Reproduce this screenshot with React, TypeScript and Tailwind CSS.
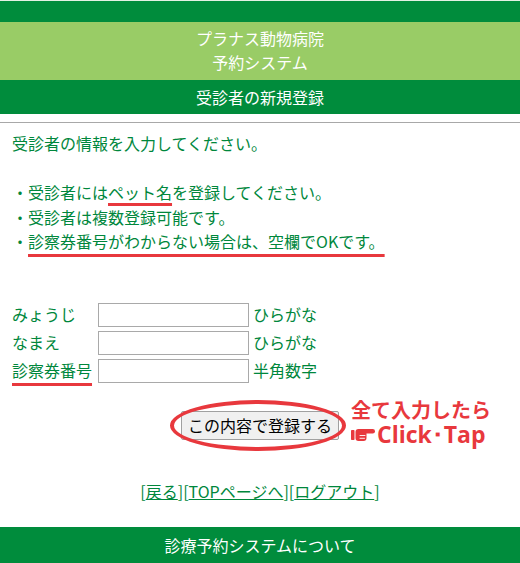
const GREEN = 'bg-[#008c3c]'

const FIELDS = [
  { label: 'みょうじ', hint: 'ひらがな', mark: false },
  { label: 'なまえ', hint: 'ひらがな', mark: false },
  { label: '診察券番号', hint: '半角数字', mark: true },
]

function PointingHand() {
  return (
    <svg width="24" height="16" viewBox="0 0 24 16" className="shrink-0">
      <rect x="0" y="4" width="3.5" height="10" rx="0.8" fill="#e8383d" />
      <rect x="4.5" y="3" width="11" height="12" rx="3" fill="#e8383d" />
      <rect x="10" y="3" width="14" height="4.6" rx="2.3" fill="#e8383d" />
      <path d="M9 9.5h5M9 12.3h4.5" stroke="#fff" strokeWidth="0.9" strokeLinecap="round" />
    </svg>
  )
}

export default function App() {
  return (
    <div className="w-[520px] min-h-[563px] bg-white font-['Noto_Sans_CJK_JP','Noto_Sans',sans-serif] text-[#00873c]">
      {/* header */}
      <div className="h-px bg-[#e4f1e4]" />
      <div className={'h-[21px] ' + GREEN} />
      <div className="h-[58px] bg-[#99cc66] flex flex-col items-center justify-center text-white text-[16px] leading-[24px] pb-[2px]">
        <div>プラナス動物病院</div>
        <div>予約システム</div>
      </div>
      <div className={'h-[34px] flex items-center justify-center text-white text-[16px] ' + GREEN}>
        受診者の新規登録
      </div>
      <div className="h-2" />
      <div className="h-px bg-[#a8a8a8]" />

      {/* body */}
      <div className="px-3 pt-[8px] text-[16px] leading-[24.5px]">
        <p>受診者の情報を入力してください。</p>
        <p>&nbsp;</p>
        <p>
          ・受診者には
          <span className="underline decoration-[#e8383d] decoration-[3px] underline-offset-[4px]">ペット名</span>
          を登録してください。
        </p>
        <p>・受診者は複数登録可能です。</p>
        <p>
          ・
          <span className="underline decoration-[#e8383d] decoration-[3px] underline-offset-[6px]">
            診察券番号がわからない場合は、空欄でOKです。
          </span>
        </p>

        <form className="mt-[49px] flex flex-col gap-1">
          {FIELDS.map(f => (
            <div key={f.label} className="flex items-center h-6">
              <span
                className={
                  'w-[86px] ' +
                  (f.mark ? 'underline decoration-[#e8383d] decoration-[3px] underline-offset-[6px]' : '')
                }
              >
                {f.label}
              </span>
              <input type="text" className="w-[151px] h-6 border border-[#a9a9a9] bg-white outline-none" />
              <span className="ml-[4px]">{f.hint}</span>
            </div>
          ))}

          <div className="mt-[24px] flex justify-center">
            <div className="relative">
              <button
                type="button"
                className="h-[29px] w-[158px] border border-[#a0a0a0] rounded-[2px] bg-[#f0f0f0] text-black text-[16px] leading-none"
              >
                この内容で登録する
              </button>
              <div className="absolute left-[-11px] top-[-11px] w-[176px] h-[51px] rounded-[50%] border-[4px] border-[#e8383d] pointer-events-none" />
              <div className="absolute left-[170px] top-[-14px] w-[150px] text-[#e8383d] font-bold text-[20px] leading-[25px] whitespace-nowrap">
                <div>全て入力したら</div>
                <div className="flex items-center gap-[2px]">
                  <PointingHand />
                  <span className="font-['Open_Sans',sans-serif] text-[23px]">Click･Tap</span>
                </div>
              </div>
            </div>
          </div>
        </form>

        <div className="mt-[39px] text-center leading-[24px]">
          [<a href="#" className="underline">戻る</a>][<a href="#" className="underline">TOPページへ</a>][<a href="#" className="underline">ログアウト</a>]
        </div>
      </div>

      {/* footer */}
      <div className={'mt-[24px] h-[36px] flex items-center justify-center text-white text-[16px] ' + GREEN}>
        診療予約システムについて
      </div>
    </div>
  )
}
